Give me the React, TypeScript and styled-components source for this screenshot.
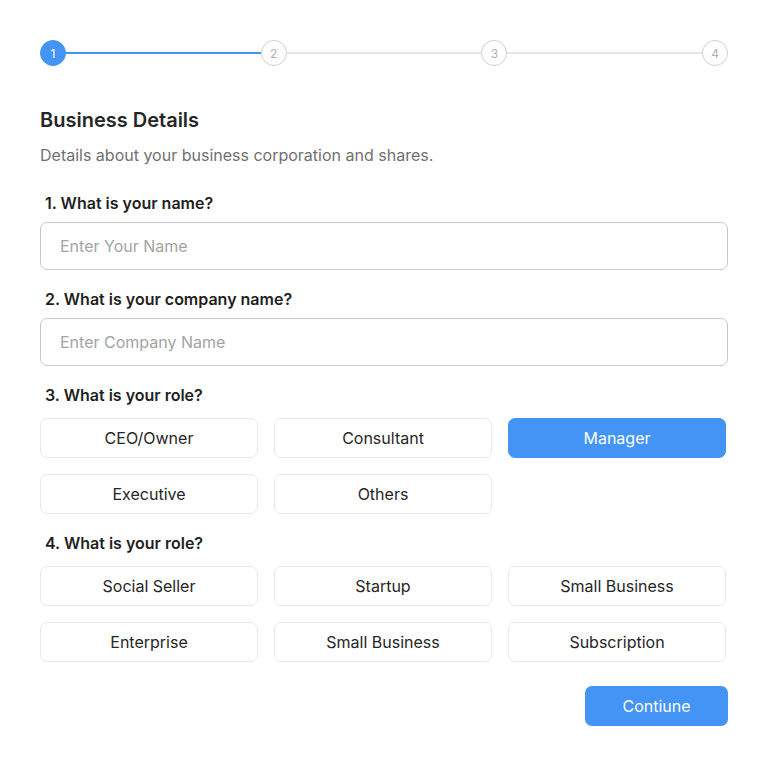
import React from "react";
import styled, { createGlobalStyle } from "styled-components";

const Global = createGlobalStyle`
  html, body { margin: 0; padding: 0; background: #fff; }
  body { font-family: Inter, "Noto Sans", sans-serif; color: #222; -webkit-font-smoothing: antialiased; }
  * { box-sizing: border-box; }
`;

const BLUE = "#4394f5";

const Page = styled.div`
  padding: 40px 40px;
  display: flex;
  flex-direction: column;
`;

const Stepper = styled.div`
  display: flex;
  align-items: center;
  height: 26px;
`;

const Step = styled.div<{ $active?: boolean }>`
  width: 26px;
  height: 26px;
  flex: none;
  border-radius: 50%;
  display: flex;
  align-items: center;
  justify-content: center;
  font-size: 12px;
  color: ${(p) => (p.$active ? "#fff" : "#b0b0b0")};
  background: ${(p) => (p.$active ? BLUE : "#fff")};
  border: 1px solid ${(p) => (p.$active ? BLUE : "#d0d0d0")};
`;

const Line = styled.div<{ $active?: boolean }>`
  flex: 1;
  height: 2px;
  background: ${(p) => (p.$active ? BLUE : "#e6e6e6")};
`;

const Title = styled.h1`
  margin: 40px 0 0;
  font-size: 20px;
  line-height: 28px;
  font-weight: 600;
  color: #262626;
`;

const Subtitle = styled.p`
  margin: 9px 0 0;
  font-size: 16px;
  line-height: 24px;
  color: #707070;
`;

const Label = styled.div<{ $first?: boolean }>`
  margin-top: ${(p) => (p.$first ? 24 : 17)}px;
  padding-left: 5px;
  font-size: 16px;
  line-height: 24px;
  font-weight: 600;
  color: #1f1f1f;
`;

const Input = styled.input`
  margin-top: 7px;
  width: 100%;
  height: 48px;
  border: 1px solid #c9c9c9;
  border-radius: 7px;
  padding: 0 19px;
  font-family: inherit;
  font-size: 16px;
  color: #222;
  outline: none;
  &::placeholder { color: #a3a3a3; }
`;

const Grid = styled.div`
  margin-top: 11px;
  display: grid;
  grid-template-columns: repeat(3, 218px);
  gap: 16px;
`;

const Choice = styled.button<{ $selected?: boolean }>`
  height: 40px;
  border-radius: 7px;
  font-family: inherit;
  font-size: 16px;
  cursor: pointer;
  color: ${(p) => (p.$selected ? "#fff" : "#262626")};
  background: ${(p) => (p.$selected ? BLUE : "#fff")};
  border: 1px solid ${(p) => (p.$selected ? BLUE : "#e9e9e9")};
`;

const Footer = styled.div`
  margin-top: 24px;
  display: flex;
  justify-content: flex-end;
`;

const Primary = styled.button`
  width: 143px;
  height: 40px;
  border: none;
  border-radius: 7px;
  background: ${BLUE};
  color: #fff;
  font-family: inherit;
  font-size: 16px;
  cursor: pointer;
`;

const roles = ["CEO/Owner", "Consultant", "Manager", "Executive", "Others"];
const types = ["Social Seller", "Startup", "Small Business", "Enterprise", "Small Business", "Subscription"];

export default function App() {
  return (
    <>
      <Global />
      <Page>
        <Stepper>
          <Step $active>1</Step>
          <Line $active />
          <Step>2</Step>
          <Line />
          <Step>3</Step>
          <Line />
          <Step>4</Step>
        </Stepper>
        <Title>Business Details</Title>
        <Subtitle>Details about your business corporation and shares.</Subtitle>
        <Label $first>1. What is your name?</Label>
        <Input placeholder="Enter Your Name" />
        <Label>2. What is your company name?</Label>
        <Input placeholder="Enter Company Name" />
        <Label>3. What is your role?</Label>
        <Grid>
          {roles.map((r) => (
            <Choice key={r} $selected={r === "Manager"}>{r}</Choice>
          ))}
        </Grid>
        <Label>4. What is your role?</Label>
        <Grid>
          {types.map((t, i) => (
            <Choice key={i}>{t}</Choice>
          ))}
        </Grid>
        <Footer>
          <Primary>Contiune</Primary>
        </Footer>
      </Page>
    </>
  );
}
